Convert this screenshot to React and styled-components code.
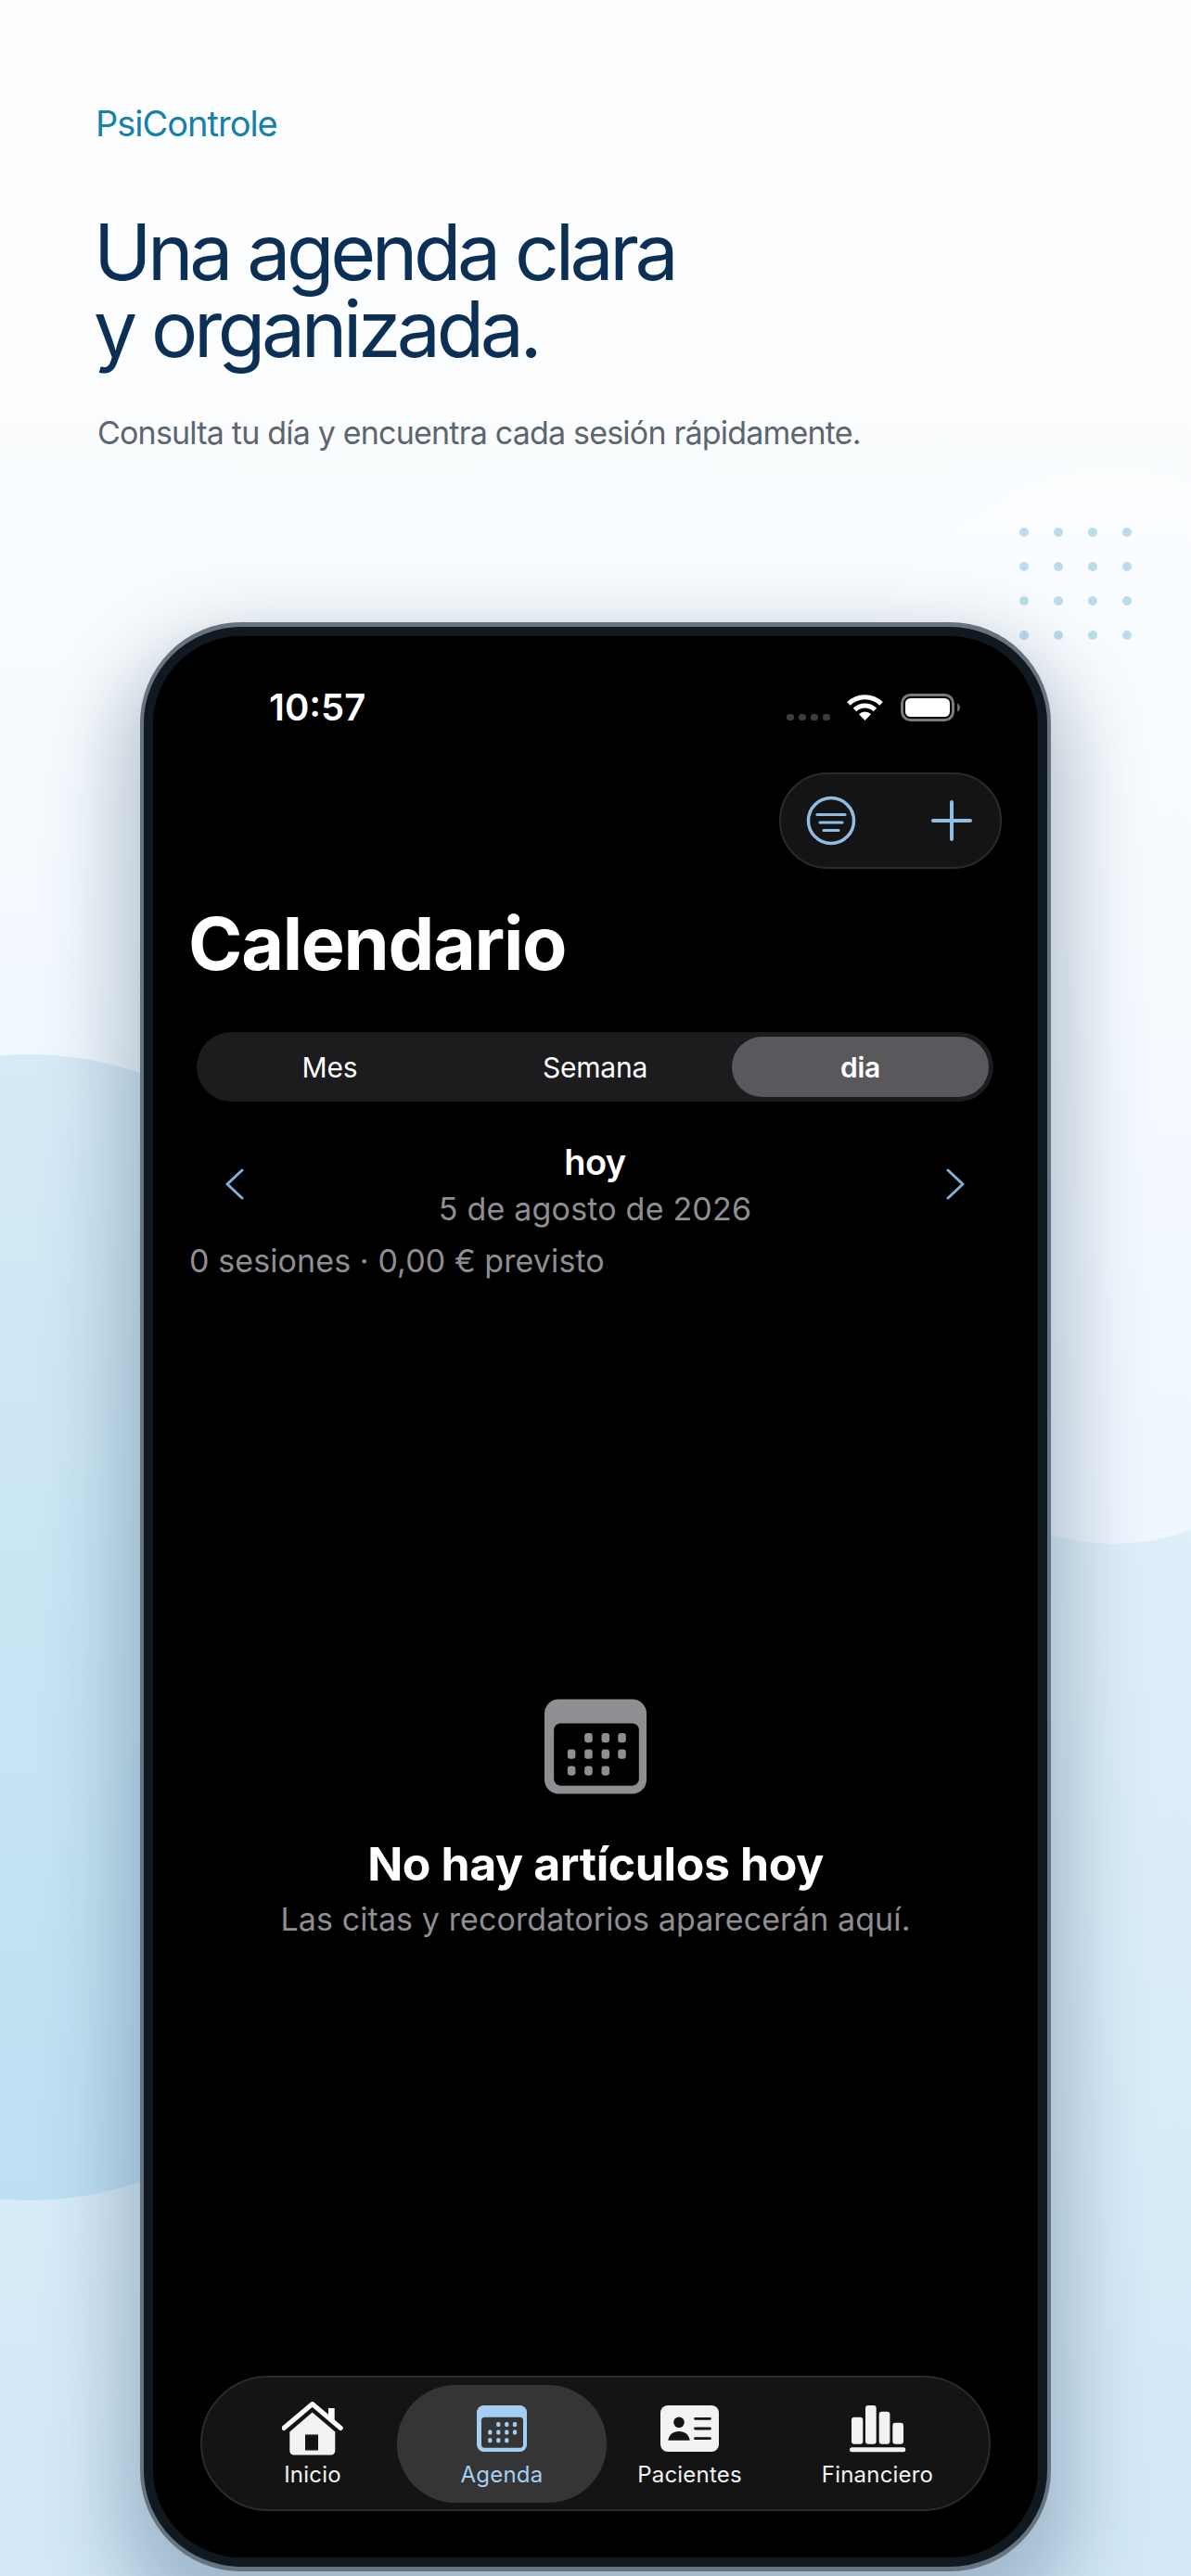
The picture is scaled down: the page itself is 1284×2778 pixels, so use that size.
import React from 'react'
import styled, { createGlobalStyle } from 'styled-components'

const GlobalStyle = createGlobalStyle`
  html, body {
    margin: 0;
    padding: 0;
  }
  body {
    font-family: Inter, "Liberation Sans", sans-serif;
    background: #fff;
  }
  * {
    box-sizing: border-box;
  }
`

const Page = styled.div`
  position: relative;
  width: 1284px;
  height: 2778px;
  overflow: hidden;
  padding-top: 110px;
  background: linear-gradient(180deg, #fefeff 0%, #f9fcfe 22%, #f1f8fe 40%, #dfeffa 60%, #d2e8f7 100%);
`

const LeftBlob = styled.div`
  position: absolute;
  left: -438px;
  top: 1137px;
  width: 940px;
  height: 1236px;
  border-radius: 50%;
  background: linear-gradient(180deg, #d6eaf6 0%, #c9e5f4 45%, #bee0f3 100%);
`

const RightBlob = styled.div`
  position: absolute;
  left: 830px;
  top: 505px;
  width: 740px;
  height: 1160px;
  border-radius: 50%;
  background: linear-gradient(180deg, #fbfdff 0%, #f5faff 50%, #eef6fe 100%);
`

const DotGrid = styled.div`
  position: absolute;
  left: 1099px;
  top: 569px;
  display: grid;
  grid-template-columns: repeat(4, 10px);
  gap: 27px;
`

const Dot = styled.span`
  width: 10px;
  height: 10px;
  border-radius: 50%;
  background: #bcdcec;
`

const Header = styled.header`
  position: relative;
  padding-left: 103px;
`

const Brand = styled.div`
  font-size: 38px;
  line-height: 46px;
  letter-spacing: -1px;
  color: #1580a8;
`

const Headline = styled.h1`
  margin: 74px 0 0 -2px;
  font-size: 84px;
  line-height: 83px;
  font-weight: 400;
  letter-spacing: -4.4px;
  color: #0b2f55;
`

const Lead = styled.p`
  margin: 50px 0 0 2px;
  font-size: 34px;
  line-height: 42px;
  letter-spacing: -0.8px;
  color: #5c6670;
`

const Phone = styled.div`
  position: absolute;
  left: 151px;
  top: 671px;
  width: 982px;
  height: 2102px;
  border-style: solid;
  border-width: 5px 4px;
  border-color: #67747f;
  border-radius: 109px;
  padding: 10px;
  background: #101820;
  box-shadow: 0 40px 80px 25px rgba(30, 60, 90, 0.28);
`

const Screen = styled.div`
  display: flex;
  flex-direction: column;
  height: 100%;
  border-radius: 95px;
  background: #000;
  color: #fff;
  padding-bottom: 50px;
`

const StatusBar = styled.div`
  display: flex;
  align-items: flex-start;
  height: 30px;
  margin-top: 62px;
  padding: 0 84px 0 125px;
`

const Clock = styled.div`
  font-size: 40px;
  line-height: 30px;
  font-weight: 600;
`

const StatusIcons = styled.div`
  display: flex;
  align-items: flex-start;
  margin-left: auto;
`

const SignalDots = styled.div`
  display: flex;
  gap: 5px;
  margin: 22px 18px 0 0;
`

const SignalDot = styled.span`
  width: 8px;
  height: 7px;
  border-radius: 3px;
  background: #3c3c3c;
`

const BatterySvg = styled.svg`
  margin-left: 19px;
`

const ActionRow = styled.div`
  display: flex;
  justify-content: flex-end;
  margin-top: 55px;
  padding-right: 39px;
`

const ActionPill = styled.div`
  display: flex;
  align-items: center;
  justify-content: space-between;
  width: 240px;
  height: 104px;
  padding: 0 30px 0 27px;
  border-radius: 52px;
  border: 2px solid #2b2b2b;
  background: #141414;
`

const ScreenTitle = styled.h2`
  margin: 33px 0 0 38px;
  font-size: 79px;
  line-height: 94px;
  font-weight: 700;
  letter-spacing: -1.3px;
`

const Segmented = styled.div`
  display: grid;
  grid-template-columns: 277px 295px 277px;
  align-items: center;
  width: 859px;
  height: 75px;
  margin: 49px 0 0 47px;
  padding: 5px;
  border-radius: 38px;
  background: #1c1c1e;
`

const Segment = styled.div`
  display: flex;
  align-items: center;
  justify-content: center;
  height: 65px;
  border-radius: 33px;
  font-size: 30px;
  font-weight: ${p => (p.$active ? 600 : 400)};
  letter-spacing: -0.2px;
  background: ${p => (p.$active ? '#59585c' : 'transparent')};
`

const DayNav = styled.div`
  display: flex;
  align-items: center;
  justify-content: space-between;
  margin-top: 42px;
  padding: 0 79px 0 78px;
`

const DayLabel = styled.div`
  text-align: center;
`

const Today = styled.div`
  font-size: 38px;
  line-height: 46px;
  font-weight: 600;
  letter-spacing: -0.6px;
`

const DateText = styled.div`
  margin-top: 7px;
  font-size: 34px;
  line-height: 41px;
  letter-spacing: 0.2px;
  color: #8e8e93;
`

const Summary = styled.div`
  margin: 15px 0 0 39px;
  font-size: 34px;
  line-height: 41px;
  letter-spacing: 0.1px;
  color: #8e8e93;
`

const EmptyState = styled.div`
  display: flex;
  flex-direction: column;
  align-items: center;
  margin-top: 452px;
`

const EmptyTitle = styled.div`
  margin-top: 45px;
  font-size: 50px;
  line-height: 60px;
  font-weight: 700;
  letter-spacing: -0.4px;
`

const EmptyText = styled.div`
  margin-top: 9px;
  font-size: 34px;
  line-height: 41px;
  letter-spacing: 0.1px;
  color: #8e8e93;
`

const TabBar = styled.nav`
  display: grid;
  grid-template-columns: 204px 204px 201px 204px;
  width: 852px;
  height: 146px;
  margin: auto 0 0 51px;
  padding: 8px 17px;
  border-radius: 73px;
  border: 2px solid #2b2b2b;
  background: #141414;
`

const Tab = styled.div`
  display: flex;
  flex-direction: column;
  align-items: center;
  height: 127px;
  margin: 0 ${p => (p.$active ? '-11px' : '0')};
  padding-top: 18px;
  border-radius: 63px;
  background: ${p => (p.$active ? '#353535' : 'transparent')};
`

const TabIcon = styled.div`
  display: flex;
  align-items: center;
  height: 58px;
`

const TabLabel = styled.div`
  margin-top: 6px;
  font-size: 24px;
  line-height: 29px;
  font-weight: 400;
  letter-spacing: 0.2px;
  color: ${p => (p.$active ? '#a5cff2' : '#f2f2f2')};
`

const WifiIcon = () => (
  <svg width="39" height="29" viewBox="0 0 39 29" fill="none">
    <path d="M1.9 10.9a25 25 0 0 1 35.2 0" stroke="#fff" strokeWidth="5" />
    <path d="M8.6 17.5a15.5 15.5 0 0 1 21.8 0" stroke="#fff" strokeWidth="5" />
    <path d="M19.5 29l-6.5-6.8a9 9 0 0 1 13 0z" fill="#fff" />
  </svg>
)

const BatteryIcon = () => (
  <BatterySvg width="64" height="30" viewBox="0 0 64 30" fill="none">
    <rect x="1.5" y="1.5" width="55" height="27" rx="9" stroke="#7a7a7a" strokeWidth="3" />
    <rect x="5" y="5" width="48" height="20" rx="5.5" fill="#fff" />
    <path d="M61 10.5c2 .6 3 2.4 3 4.5s-1 3.9-3 4.5z" fill="#6a6a6a" />
  </BatterySvg>
)

const FilterIcon = () => (
  <svg width="54" height="54" viewBox="0 0 54 54" fill="none" stroke="#8fbde3" strokeLinecap="round">
    <circle cx="27" cy="27" r="24.5" strokeWidth="3.5" />
    <path d="M12 20.5h30M15 29h24M19 37.5h16" strokeWidth="3.2" />
  </svg>
)

const PlusIcon = () => (
  <svg width="44" height="44" viewBox="0 0 44 44" fill="none" stroke="#8fbde3" strokeWidth="4" strokeLinecap="round">
    <path d="M22 2v40M2 22h40" />
  </svg>
)

const Chevron = ({ flip }) => (
  <svg width="20" height="34" viewBox="0 0 20 34" fill="none" stroke="#7fb0dc" strokeWidth="3" strokeLinecap="round" strokeLinejoin="round">
    <path d={flip ? 'M2 2l16 15L2 32' : 'M18 2L2 17l16 15'} />
  </svg>
)

const calendarDots = [
  [23.3, 20.4], [32.3, 20.4], [41, 20.4],
  [14.3, 29], [23.3, 29], [32.3, 29], [41, 29],
  [14.3, 37.8], [23.3, 37.8], [32.3, 37.8]
]

const CalendarIcon = ({ width, height, color, hole }) => (
  <svg width={width} height={height} viewBox="0 0 54 50">
    <rect width="54" height="50" rx="7.5" fill={color} />
    <rect x="5" y="12.7" width="45" height="33" rx="3.5" fill={hole} />
    {calendarDots.map(([x, y], index) => (
      <rect key={index} x={x - 2.1} y={y - 2.5} width="4.2" height="5" rx="1.5" fill={color} />
    ))}
  </svg>
)

const HomeIcon = () => (
  <svg width="66" height="58" viewBox="0 0 66 58">
    <path d="M50 7h6.7v13H50z" fill="#fff" />
    <path d="M2 28.5L32.7 2.5l30.6 26" fill="none" stroke="#fff" strokeWidth="5" strokeLinecap="round" strokeLinejoin="round" />
    <path d="M32.7 11.5L8.3 32.5V53a4.5 4.5 0 0 0 4.5 4.5h40a4.5 4.5 0 0 0 4.5-4.5V32.5z" fill="#f2f2f2" />
    <rect x="25" y="35.5" width="14" height="17" fill="#141414" />
  </svg>
)

const PatientIcon = () => (
  <svg width="63" height="50" viewBox="0 0 63 50">
    <rect width="63" height="50" rx="8" fill="#f2f2f2" />
    <circle cx="20" cy="18.3" r="5.8" fill="#141414" />
    <path d="M8.3 37.7c.8-6 5.4-9.7 11.7-9.7s10.9 3.7 11.7 9.7z" fill="#141414" />
    <path d="M37.5 14.3h16M37.5 25h16M37.5 35.7h16" stroke="#141414" strokeWidth="2.8" strokeLinecap="round" />
  </svg>
)

const FinanceIcon = () => (
  <svg width="61" height="51" viewBox="0 0 61 51" fill="#f2f2f2">
    <rect x="2" y="12.7" width="12.3" height="29" rx="3" />
    <rect x="17" y="0" width="11.7" height="41.7" rx="3" />
    <rect x="31.7" y="6.7" width="11.7" height="35" rx="3" />
    <rect x="46.3" y="18.7" width="11.7" height="23" rx="3" />
    <rect x="0" y="45.3" width="60.3" height="5" rx="2.5" />
  </svg>
)

const tabs = [
  { label: 'Inicio', icon: <HomeIcon /> },
  { label: 'Agenda', icon: <CalendarIcon width={54} height={50} color="#a5cff2" hole="#353535" />, active: true },
  { label: 'Pacientes', icon: <PatientIcon /> },
  { label: 'Financiero', icon: <FinanceIcon /> }
]

const App = () => (
  <Page>
    <GlobalStyle />
    <LeftBlob />
    <RightBlob />
    <DotGrid>
      {Array.from({ length: 16 }).map((_, index) => <Dot key={index} />)}
    </DotGrid>
    <Header>
      <Brand>PsiControle</Brand>
      <Headline>Una agenda clara<br />y organizada.</Headline>
      <Lead>Consulta tu día y encuentra cada sesión rápidamente.</Lead>
    </Header>
    <Phone>
      <Screen>
        <StatusBar>
          <Clock>10:57</Clock>
          <StatusIcons>
            <SignalDots>
              <SignalDot /><SignalDot /><SignalDot /><SignalDot />
            </SignalDots>
            <WifiIcon />
            <BatteryIcon />
          </StatusIcons>
        </StatusBar>
        <ActionRow>
          <ActionPill>
            <FilterIcon />
            <PlusIcon />
          </ActionPill>
        </ActionRow>
        <ScreenTitle>Calendario</ScreenTitle>
        <Segmented>
          <Segment>Mes</Segment>
          <Segment>Semana</Segment>
          <Segment $active>dia</Segment>
        </Segmented>
        <DayNav>
          <Chevron />
          <DayLabel>
            <Today>hoy</Today>
            <DateText>5 de agosto de 2026</DateText>
          </DayLabel>
          <Chevron flip />
        </DayNav>
        <Summary>0 sesiones · 0,00 € previsto</Summary>
        <EmptyState>
          <CalendarIcon width={110} height={103} color="#8e8e93" hole="#000" />
          <EmptyTitle>No hay artículos hoy</EmptyTitle>
          <EmptyText>Las citas y recordatorios aparecerán aquí.</EmptyText>
        </EmptyState>
        <TabBar>
          {tabs.map(tab => (
            <Tab key={tab.label} $active={tab.active}>
              <TabIcon>{tab.icon}</TabIcon>
              <TabLabel $active={tab.active}>{tab.label}</TabLabel>
            </Tab>
          ))}
        </TabBar>
      </Screen>
    </Phone>
  </Page>
)

export default App
